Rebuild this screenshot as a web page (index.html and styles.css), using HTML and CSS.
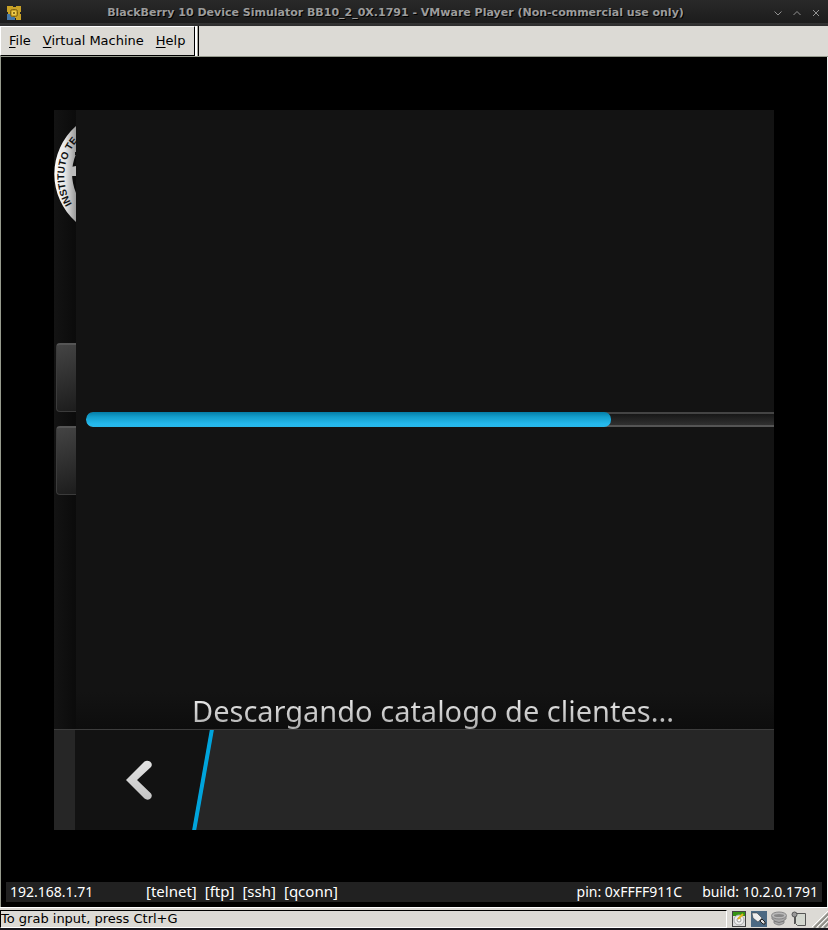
FILE: index.html
```html
<!DOCTYPE html>
<html lang="en">
<head>
<meta charset="utf-8">
<title>BlackBerry 10 Device Simulator</title>
<link rel="stylesheet" href="styles.css">
</head>
<body>
<header class="titlebar">
  <svg class="app-icon" viewBox="0 0 14 14" aria-hidden="true">
    <path fill="#c9a227" d="M0 0h14v14H0z"/>
    <path fill="#4678a8" d="M0 8h4v3h4v3H0z"/>
    <path fill="#242424" d="M6 0h3v1H6zM0 6h1v2H0zM13 6h1v2h-1zM8 12h1v2H8z"/>
    <rect x="3.500" y="3.500" width="7" height="7" rx="2" fill="none" stroke="#806414"/>
    <rect x="5" y="5" width="4" height="4" rx="1" fill="#f0cf50"/>
    <path fill="#8a7020" d="M6 6h2v2H6z"/>
  </svg>
  <h1>BlackBerry 10 Device Simulator BB10_2_0X.1791 - VMware Player (Non-commercial use only)</h1>
  <div class="window-buttons">
    <button type="button" aria-label="Minimize"><svg viewBox="0 0 8 8"><path d="M.5 2.500 4 6l3.500-3.500"/></svg></button>
    <button type="button" aria-label="Maximize"><svg viewBox="0 0 8 8"><path d="M.5 6 4 2.500 7.500 6"/></svg></button>
    <button type="button" aria-label="Close"><svg viewBox="0 0 8 8"><path d="m1 1 6 6M7 1 1 7"/></svg></button>
  </div>
</header>
<nav class="menubar">
  <div class="menus">
    <button type="button"><u>F</u>ile</button>
    <button type="button"><u>V</u>irtual Machine</button>
    <button type="button"><u>H</u>elp</button>
  </div>
</nav>
<main class="stage">
  <section class="device">
    <div class="content">
      <aside class="peek">
        <svg class="seal" viewBox="0 0 22 100" role="img" aria-label="Instituto">
          <defs>
            <linearGradient id="ring"><stop offset="0" stop-color="#fff"/><stop offset=".5" stop-color="#e6e6e6"/><stop offset="1" stop-color="#999"/></linearGradient>
            <path id="arc" d="M18 79A54 54 0 0 1 42 2"/>
          </defs>
          <path fill="url(#ring)" d="M22 1A64 64 0 0 0 22 97V68A52 52 0 0 1 22 29z"/>
          <path fill="#bbb" d="M17 42q-1 4 0 9h5V41z"/>
          <path d="M21 27h1v3h-1z" fill="#111"/>
          <text><textPath href="#arc">INSTITUTO TE</textPath></text>
        </svg>
        <div class="tile"></div>
        <div class="tile"></div>
      </aside>
      <div class="panel">
        <progress id="download" value="525" max="688" aria-label="Descargando"></progress>
        <label class="message" for="download">Descargando catalogo de clientes...</label>
      </div>
    </div>
    <div class="actionbar">
      <button class="back" type="button" aria-label="Back"><svg viewBox="0 0 26 40"><defs><linearGradient id="chev" x2="0" y2="1"><stop stop-color="#e4e4e4"/><stop offset="1" stop-color="#c4c4c4"/></linearGradient></defs><path fill="url(#chev)" d="M18.500 1.500Q21 0 24 1.500Q27 4 25 7L11 20l14 13.500q2 3-1 5.500-3 1.500-5.500-.5L0 20z"/></svg></button>
      <svg class="slash" viewBox="0 0 24 100" preserveAspectRatio="none" aria-hidden="true"><path fill="#121212" d="M0 0h20L3 100H0z"/><path stroke="#00a4dc" stroke-width="4" d="M20-1 2 101"/></svg>
    </div>
  </section>
  <div class="device-info">
    <span class="ip">192.168.1.71</span>
    <span class="services"><span>[telnet]</span><span>[ftp]</span><span>[ssh]</span><span>[qconn]</span></span>
    <span class="pin">pin: 0xFFFF911C</span>
    <span>build: 10.2.0.1791</span>
  </div>
</main>
<footer class="statusbar">
  <p>To grab input, press Ctrl+G</p>
  <div class="tray">
    <svg viewBox="0 0 16 16" aria-hidden="true"><rect x="1.500" y=".5" width="13" height="15" fill="#ddd" stroke="#444"/><path fill="#369414" d="M2 1h12v4H2z"/><circle cx="8" cy="9" r="5" fill="#eee" stroke="#aaa"/><circle cx="8" cy="9" r="2" fill="#fff" stroke="#999"/><path stroke="#e2b71d" stroke-width="2" d="m7 8 5-5"/></svg>
    <svg viewBox="0 0 16 16" aria-hidden="true"><path fill="#4b6983" d="M0 0h16v16H0z"/><path fill="#eee" stroke="#333" stroke-width=".5" d="M1 2h5l5 5-4 4-5-4z"/><path fill="#ddd" stroke="#222" d="m9 10 2-2 3 3v2h-2z"/></svg>
    <svg viewBox="0 0 16 16" aria-hidden="true"><path fill="#a8a8a8" stroke="#888" d="M1 5v3l2 1v3q5 4 10 0V9l2-1V5z"/><ellipse cx="8" cy="4.500" rx="7.500" ry="3.500" fill="#b8b8b8" stroke="#888"/><ellipse cx="8" cy="4.500" rx="5" ry="1.500" fill="#888"/><path d="M3 10q5 3 10 0" fill="none" stroke="#777"/></svg>
    <svg viewBox="0 0 16 16" aria-hidden="true"><path fill="#d3d7cf" stroke="#555" d="M4.500 2.500h10v12h-8l-2-2z"/><path stroke="#555" d="M3.500 4v9"/><circle cx="3.500" cy="3.500" r="2.500" fill="#999" stroke="#555"/></svg>
  </div>
  <svg class="grip" viewBox="0 0 16 18" aria-hidden="true"><path stroke="#fff" d="M0 17 16 1M5 17 16 6M10 17l6-6"/><path stroke="#8f8e87" stroke-width="2" d="M2 18 17 3M7 18l10-10M12 18l5-5"/></svg>
</footer>
</body>
</html>
```

FILE: styles.css
```css
* { box-sizing: border-box; }
body {
  margin: 0;
  min-height: 100vh;
  display: flex;
  flex-direction: column;
  background: #000;
  color: #000;
  font: 13px/16px "DejaVu Sans", sans-serif;
}
button {
  margin: 0;
  padding: 0;
  border: 0;
  background: none;
  color: inherit;
  font: inherit;
}
svg { display: block; }
h1, p { margin: 0; }

.titlebar {
  display: flex;
  align-items: center;
  height: 26px;
  padding: 0 8px 1px 7px;
  background: linear-gradient(#292929, #1c1c1c 23px, #343434 23px, #2d2d2d);
}
.app-icon { width: 14px; height: 14px; }
.titlebar h1 {
  flex: 1;
  padding-right: 4px;
  font-size: 11px;
  line-height: 16px;
  text-align: center;
  white-space: nowrap;
  color: #9c9c9c;
  text-shadow: 1px 1px 0 #000;
}
.window-buttons { display: flex; gap: 11px; }
.window-buttons svg {
  width: 8px;
  height: 8px;
  fill: none;
  stroke: #919191;
}

.menubar {
  display: flex;
  height: 31px;
  background: #dcdad5;
  border-bottom: 1px solid #979b8e;
}
.menus {
  display: flex;
  gap: 12px;
  padding: 0 9px 0 8px;
  border: 1px solid #fff;
  border-right: 1px solid #000;
  border-bottom: 1px solid #000;
  box-shadow: 1px 0 #fff, 2px 0 #fff, 3px 0 #aaa89f, 4px 0 #000;
}
.menus u { text-underline-offset: 2px; }

.stage {
  flex: 1;
  display: flex;
  flex-direction: column;
  justify-content: space-between;
  padding: 53px 5px 5px;
  border-left: 1px solid #979b8e;
  border-right: 1px solid #eee;
  background: #000;
}
.device {
  display: flex;
  flex-direction: column;
  margin: 0 48px;
  aspect-ratio: 1;
  background: #131313;
}
.content { flex: 1; display: flex; min-height: 0; }
.peek {
  width: 22px;
  flex: none;
  padding-top: 15px;
  background: linear-gradient(90deg, #131313, #0b0b0b);
  overflow: hidden;
}
.seal { width: 22px; height: 100px; margin-bottom: 118px; }
.seal text { font: 700 10px "Liberation Sans", sans-serif; fill: #111; }
.tile {
  height: 69px;
  margin: 0 0 14px 2px;
  border: 1px solid #3b3b3b;
  border-top: 2px solid #555;
  border-right: 0;
  border-radius: 4px 0 0 4px;
  background: linear-gradient(160deg, #444, #1c1c1c);
}
.panel {
  flex: 1;
  display: flex;
  flex-direction: column;
  justify-content: flex-end;
  align-items: center;
  gap: 266px;
  padding-left: 10px;
  background: linear-gradient(#131313 94%, #0d0d0d);
}
progress {
  appearance: none;
  display: block;
  width: 100%;
  height: 15px;
  border: 0;
  border-radius: 7px 0 0 7px;
  overflow: hidden;
}
progress::-webkit-progress-bar {
  background: linear-gradient(#444 2px, #171717 2px, #303030 13px, #555 13px);
}
progress::-webkit-progress-value {
  border-radius: 7px;
  background: linear-gradient(#047da6, #149fcd 5px, #25b9ec 12px, #29b7e8);
}
.message {
  padding-left: 6px;
  font: 29px/36px "Noto Sans", sans-serif;
  white-space: nowrap;
  color: transparent;
  background: linear-gradient(#e4e4e4 25%, #aaa);
  background-clip: text;
}
.actionbar {
  display: flex;
  height: 101px;
  flex: none;
  padding-left: 21px;
  border-top: 1px solid #3d3d3d;
  background: #262626;
}
.back { width: 117px; padding-left: 51px; background: #121212; }
.back svg { width: 26px; height: 40px; }
.slash { width: 24px; height: 100px; }

.device-info {
  display: flex;
  align-items: baseline;
  height: 20px;
  padding: 0 4px;
  background: #212121;
  color: #fff;
  font: 14px/20px "Noto Sans", sans-serif;
}
.ip { width: 136px; }
.services { display: flex; gap: 8px; flex: 1; font-size: 15px; line-height: 18px; }
.pin { margin-right: 20px; }

.statusbar {
  display: flex;
  height: 23px;
  background: #dcdad5;
  border-top: 1px solid #fff;
  border-bottom: 2px solid #16161c;
}
.statusbar p {
  flex: 1;
  margin: 2px 0 0;
  border: 1px solid #fff;
  border-top-color: #000;
  border-left-color: #000;
}
.tray { display: flex; align-items: center; gap: 4px; padding: 1px 5px 0 4px; }
.tray svg { width: 16px; height: 16px; }
.grip { width: 16px; height: 18px; align-self: flex-end; }
```
